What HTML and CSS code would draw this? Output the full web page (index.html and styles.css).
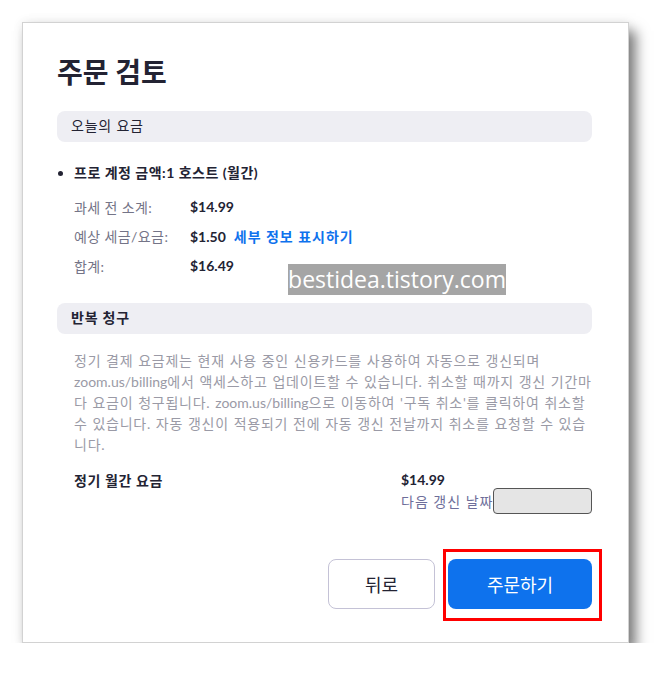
FILE: index.html
```html
<!DOCTYPE html>
<html lang="ko">
<head>
    <meta charset="UTF-8">
    <title>주문 검토</title>
    <link rel="stylesheet" href="styles.css">
</head>
<body>
    <div class="card">
        <h1 class="title">주문 검토</h1>

        <div class="section-head">오늘의 요금</div>
        <ul class="items">
            <li>프로 계정 금액:1 호스트 (월간)</li>
        </ul>
        <div class="rows">
            <div class="row"><span class="label">과세 전 소계:</span><span class="value">$14.99</span></div>
            <div class="row"><span class="label">예상 세금/요금:</span><span class="value">$1.50</span><a class="link" href="#">세부 정보 표시하기</a></div>
            <div class="row"><span class="label">합계:</span><span class="value">$16.49</span></div>
        </div>

        <div class="section-head bold">반복 청구</div>
        <p class="notice">정기 결제 요금제는 현재 사용 중인 신용카드를 사용하여 자동으로 갱신되며 <span class="url">zoom.us/billing</span>에서 액세스하고 업데이트할 수 있습니다. 취소할 때까지 갱신 기간마다 요금이 청구됩니다. <span class="url">zoom.us/billing</span>으로 이동하여 '구독 취소'를 클릭하여 취소할 수 있습니다. 자동 갱신이 적용되기 전에 자동 갱신 전날까지 취소를 요청할 수 있습니다.</p>

        <div class="recurring">
            <span class="rec-label">정기 월간 요금</span>
            <div class="rec-info">
                <div class="value">$14.99</div>
                <div class="next">다음 갱신 날짜<span class="date-box"></span></div>
            </div>
        </div>

        <div class="actions">
            <button class="btn btn-back">뒤로</button>
            <div class="highlight">
                <button class="btn btn-order">주문하기</button>
            </div>
        </div>

        <div class="watermark">bestidea.tistory.com</div>
    </div>
</body>
</html>
```

FILE: styles.css
```css
body {
    margin: 0;
    background: #ffffff;
    font-family: Lato, "Noto Sans CJK KR", sans-serif;
    color: #232333;
}
.card {
    position: relative;
    box-sizing: border-box;
    margin: 22px 0 0 22px;
    width: 607px;
    height: 621px;
    padding: 34px 36px 0 34px;
    background: #fff;
    border: 1px solid #d2d2d2;
    box-shadow: 7px 9px 12px rgba(0, 0, 0, 0.5), 0 0 10px rgba(0, 0, 0, 0.08);
}
.title {
    margin: 0 0 24px 0;
    font-size: 28px;
    font-weight: bold;
    line-height: 30px;
    color: #232333;
}
.section-head {
    background: #eeeef3;
    border-radius: 8px;
    height: 31px;
    line-height: 30px;
    padding-left: 14px;
    font-size: 14px;
    letter-spacing: 0.8px;
    color: #232333;
}
.section-head.bold {
    font-weight: bold;
}
.items {
    margin: 19px 0 0 0;
    padding-left: 17px;
    font-size: 14px;
    font-weight: bold;
    line-height: 24px;
    letter-spacing: 0.5px;
}
.rows {
    margin-top: 7px;
    padding-left: 17px;
}
.row {
    display: flex;
    align-items: center;
    height: 29.5px;
    font-size: 14px;
}
.label {
    width: 116px;
    color: #747487;
    letter-spacing: 0.4px;
}
.value {
    font-weight: bold;
    color: #232333;
}
.link {
    margin-left: 8px;
    color: #0e72ed;
    font-weight: bold;
    letter-spacing: 1px;
    text-decoration: none;
}
.rows + .section-head {
    margin-top: 22px;
}
.notice {
    margin: 16px 0 0 0;
    padding-left: 17px;
    font-size: 14px;
    line-height: 21px;
    letter-spacing: 0.75px;
    word-spacing: 0.5px;
    color: #9a9aa6;
}
.notice .url {
    letter-spacing: 0;
}
.recurring {
    display: flex;
    margin-top: 16px;
    padding-left: 17px;
    font-size: 14px;
}
.rec-label {
    width: 327px;
    flex-shrink: 0;
    line-height: 20px;
    font-weight: bold;
    letter-spacing: 0.6px;
    color: #232333;
}
.rec-info {
    flex-shrink: 0;
    white-space: nowrap;
}
.rec-info .value {
    line-height: 17px;
}
.next {
    display: flex;
    align-items: center;
    height: 26px;
    letter-spacing: 1px;
    color: #6e6e9a;
}
.date-box {
    display: inline-block;
    box-sizing: border-box;
    width: 99px;
    height: 26px;
    background: #e5e5e5;
    border: 1px solid #555;
    border-radius: 4px;
}
.actions {
    display: flex;
    justify-content: flex-end;
    align-items: flex-start;
    margin-top: 35px;
}
.highlight {
    margin-left: 8px;
    margin-right: -10px;
    padding: 7px 7px 9px 2px;
    border: 3px solid #ff0000;
}
.btn {
    height: 50px;
    border-radius: 8px;
    font-family: "Noto Sans CJK KR", sans-serif;
    font-size: 18px;
    cursor: pointer;
}
.btn-back {
    width: 107px;
    margin-top: 10px;
    background: #fff;
    border: 1px solid #c4c2d6;
    color: #232333;
}
.btn-order {
    display: block;
    width: 144px;
    background: #0e72ed;
    border: none;
    color: #fff;
}
.watermark {
    position: absolute;
    left: 265px;
    top: 241px;
    width: 218px;
    height: 31px;
    line-height: 31px;
    text-align: center;
    background: #a5a5a5;
    color: #fff;
    font-family: "Open Sans", sans-serif;
    font-size: 23px;
}
```
